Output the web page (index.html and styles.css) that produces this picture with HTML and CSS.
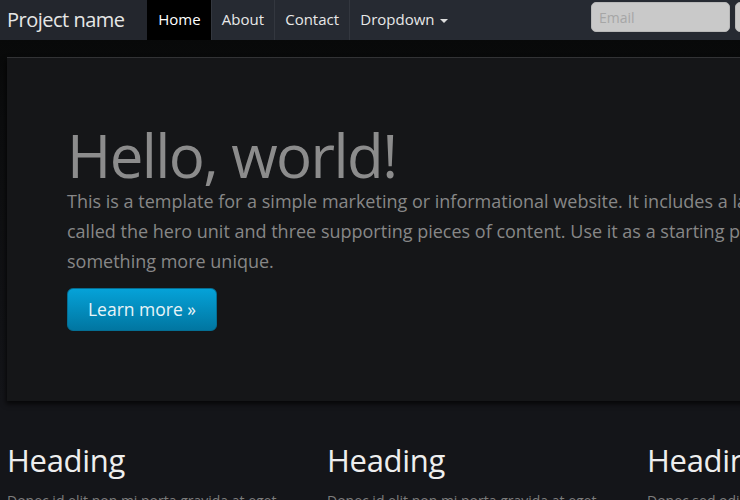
FILE: index.html
```html
<!DOCTYPE html>
<html>
<head>
<meta charset="utf-8">
<title>Project name</title>
<link rel="stylesheet" href="styles.css">
</head>
<body>
<div class="navbar">
  <div class="navbar-inner">
    <a class="brand" href="#">Project name</a>
    <ul class="nav">
      <li class="active"><a href="#">Home</a></li>
      <li><a href="#">About</a></li>
      <li><a href="#">Contact</a></li>
      <li><a href="#">Dropdown <b class="caret"></b></a></li>
    </ul>
    <form class="navbar-form">
      <input class="field" type="text" placeholder="Email">
      <input class="field" type="password" placeholder="Password">
    </form>
  </div>
</div>
<div class="container">
  <div class="hero">
    <h1>Hello, world!</h1>
    <p>This is a template for a simple marketing or informational website. It includes a large callout called the hero unit and three supporting pieces of content. Use it as a starting point to create something more unique.</p>
    <div class="actions"><a class="btn" href="#">Learn more »</a></div>
  </div>
  <div class="row">
    <div class="col">
      <h2>Heading</h2>
      <p>Donec id elit non mi porta gravida at eget metus. Fusce dapibus, tellus ac cursus commodo, tortor mauris condimentum nibh, ut fermentum massa justo sit amet risus.</p>
    </div>
    <div class="col">
      <h2>Heading</h2>
      <p>Donec id elit non mi porta gravida at eget metus. Fusce dapibus, tellus ac cursus commodo, tortor mauris condimentum nibh, ut fermentum massa justo sit amet risus.</p>
    </div>
    <div class="col">
      <h2>Heading</h2>
      <p>Donec sed odio dui. Cras justo odio, dapibus ac facilisis in, egestas eget quam. Vestibulum id ligula porta felis euismod semper.</p>
    </div>
  </div>
</div>
</body>
</html>
```

FILE: styles.css
```css
html, body {
  margin: 0;
  padding: 0;
}
body {
  width: 740px;
  height: 500px;
  overflow: hidden;
  font-family: "Open Sans", "DejaVu Sans", sans-serif;
  font-size: 14px;
  line-height: 20px;
  color: #888;
  background: linear-gradient(to bottom, #080909 40px, #0c0d0e 120px, #141519 400px, #141519 500px);
}
a { text-decoration: none; }

.navbar {
  height: 40px;
  background: #262a32;
  white-space: nowrap;
}
.navbar-inner {
  display: flex;
  width: 874px;
  height: 40px;
}
.brand {
  flex-shrink: 0;
  display: block;
  box-sizing: border-box;
  width: 147px;
  padding-left: 7px;
  background: #23262d;
  color: #e6e6e6;
  font-size: 20px;
  letter-spacing: -0.5px;
  line-height: 39px;
}
.nav {
  flex-shrink: 0;
  display: flex;
  margin: 0;
  padding: 0;
  list-style: none;
}
.nav li a {
  display: block;
  height: 40px;
  padding: 0 10px 0 10.2px;
  border-left: 1px solid #33373f;
  color: #e8e8e8;
  font-size: 15px;
  line-height: 38px;
}
.nav li.active a {
  background: #000;
  color: #fff;
  border-left-color: #000;
}
.caret {
  display: inline-block;
  width: 0;
  height: 0;
  margin-left: 2px;
  vertical-align: middle;
  border-top: 4px solid #ddd;
  border-left: 4px solid transparent;
  border-right: 4px solid transparent;
}
.navbar-form {
  flex-shrink: 0;
  display: flex;
  gap: 5px;
  margin: 2px 0 0 auto;
}
.field {
  box-sizing: border-box;
  width: 139px;
  height: 30px;
  padding: 0 7px;
  border: 1px solid #b8b8b8;
  border-radius: 5px;
  background: #c9c9c9;
  font-family: "Open Sans", sans-serif;
  font-size: 14px;
  color: #333;
}
.field::placeholder { color: #a6a6a6; }

.container {
  width: 940px;
  margin-left: 7px;
  padding-top: 17px;
}
.hero {
  padding: 66px 60px 60px;
  margin-bottom: 30px;
  background: #151618;
  border-top: 1px solid #323335;
  box-shadow: -1px 3px 5px rgba(0, 0, 0, 0.7);
}
.hero h1 {
  margin: 0;
  font-size: 60px;
  font-weight: 400;
  line-height: 62px;
  letter-spacing: -1.6px;
  color: #8c8c8c;
}
.hero p {
  margin: 0 0 12px;
  font-size: 18px;
  line-height: 30px;
  color: #878787;
}
.actions { margin-bottom: 10px; }
.btn {
  display: inline-block;
  box-sizing: border-box;
  width: 150px;
  height: 43px;
  border: 1px solid #046e93;
  border-radius: 6px;
  background: linear-gradient(to bottom, #05a2d8, #0176a1);
  color: #e9f4f8;
  font-size: 17.5px;
  line-height: 41px;
  text-align: center;
}
.row {
  display: flex;
  gap: 20px;
}
.col { width: 300px; flex-shrink: 0; }
.col h2 {
  margin: 9px 0 11px;
  font-size: 31px;
  font-weight: 400;
  line-height: 40px;
  letter-spacing: -0.3px;
  color: #eee;
}
.col p {
  margin: 0 0 10px;
  color: #7c7c7c;
}
```
